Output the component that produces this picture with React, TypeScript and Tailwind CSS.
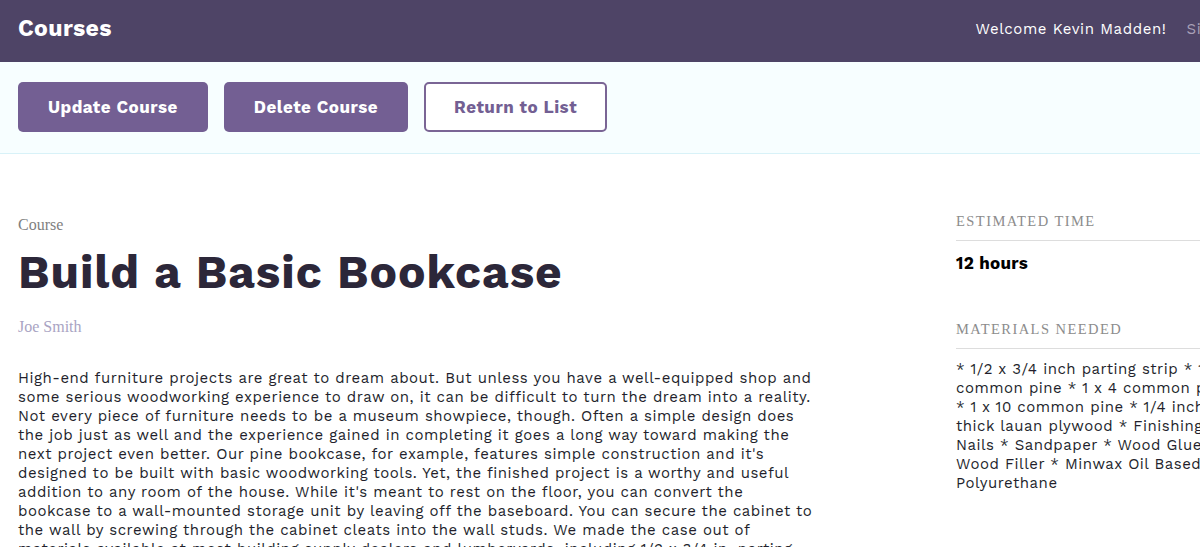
const description = [
  "High-end furniture projects are great to dream about. But unless you have a well-equipped shop and some serious woodworking experience to draw on, it can be difficult to turn the dream into a reality.",
  "Not every piece of furniture needs to be a museum showpiece, though. Often a simple design does the job just as well and the experience gained in completing it goes a long way toward making the next project even better. Our pine bookcase, for example, features simple construction and it's designed to be built with basic woodworking tools. Yet, the finished project is a worthy and useful addition to any room of the house. While it's meant to rest on the floor, you can convert the bookcase to a wall-mounted storage unit by leaving off the baseboard. You can secure the cabinet to the wall by screwing through the cabinet cleats into the wall studs. We made the case out of materials available at most building supply dealers and lumberyards, including 1/2 x 3/4 in. parting strip, 1 x 2, 1 x 4 and 1 x 10 common pine and 1/4-inch-thick lauan plywood.",
].join(" ");

const materials =
  "* 1/2 x 3/4 inch parting strip * 1 x 2 common pine * 1 x 4 common pine * 1 x 10 common pine * 1/4 inch thick lauan plywood * Finishing Nails * Sandpaper * Wood Glue * Wood Filler * Minwax Oil Based Polyurethane";

const sans = "font-['Work_Sans','Open_Sans',sans-serif]";
const serif = "font-['Liberation_Serif',serif]";

function SideItem({ label, children }: { label: string; children: React.ReactNode }) {
  return (
    <div className="mb-[43px]">
      <h4 className={`${serif} border-b border-[#dddddd] pb-[7px] text-[14.5px] uppercase tracking-[0.1em] text-[#8c8c8c]`}>
        {label}
      </h4>
      <div className="pt-[10px]">{children}</div>
    </div>
  );
}

export default function App() {
  return (
    <div className={`${sans} h-[547px] w-full overflow-hidden bg-white`}>
      <div className="w-[1290px]">
        <header className="flex h-[62px] items-center bg-[#4e4466] pb-[3px] pl-[18px] pr-[36px]">
          <h1 className="text-[23px] font-bold tracking-[0.4px] text-white">Courses</h1>
          <nav className="ml-auto flex items-center gap-5 text-[15px] tracking-[0.6px]">
            <span className="text-white">Welcome Kevin Madden!</span>
            <a className="text-[#a8a0b8]">Sign Out</a>
          </nav>
        </header>

        <div className="flex h-[92px] items-start gap-4 border-b border-[#d8f2f8] bg-[#f7feff] pl-[18px] pt-[20px]">
          <button className="h-[50px] rounded-[5px] bg-[#735f93] px-[30px] pt-[2px] text-[17px] font-bold tracking-[0.5px] text-white">
            Update Course
          </button>
          <button className="h-[50px] rounded-[5px] bg-[#735f93] px-[30px] pt-[2px] text-[17px] font-bold tracking-[0.5px] text-white">
            Delete Course
          </button>
          <button className="h-[50px] rounded-[5px] border-2 border-[#7a6595] bg-white px-[28px] pt-[2px] text-[17px] font-bold tracking-[0.5px] text-[#735f93]">
            Return to List
          </button>
        </div>

        <main className="grid grid-cols-[802px_1fr] gap-[136px] pl-[18px] pt-[59px]">
          <div>
            <p className={`${serif} text-[16px] text-[#7f7f7f]`}>Course</p>
            <h3 className="mt-[8px] text-[46px] font-bold leading-[1.2] tracking-[1px] text-[#2c2739]">
              Build a Basic Bookcase
            </h3>
            <p className={`${serif} mt-[15px] text-[16px] text-[#a9a4c3]`}>Joe Smith</p>
            <p className="mt-[30px] text-[15px] leading-[19px] tracking-[0.5px] text-[#231f2c]">{description}</p>
          </div>
          <aside className="w-[300px] -mt-[2px]">
            <SideItem label="Estimated Time">
              <p className="text-[17px] font-bold tracking-[0.3px] text-black">12 hours</p>
            </SideItem>
            <SideItem label="Materials Needed">
              <p className="w-[277px] pt-[1px] text-[15px] leading-[19px] tracking-[0.5px] text-[#231f2c]">{materials}</p>
            </SideItem>
          </aside>
        </main>
      </div>
    </div>
  );
}
